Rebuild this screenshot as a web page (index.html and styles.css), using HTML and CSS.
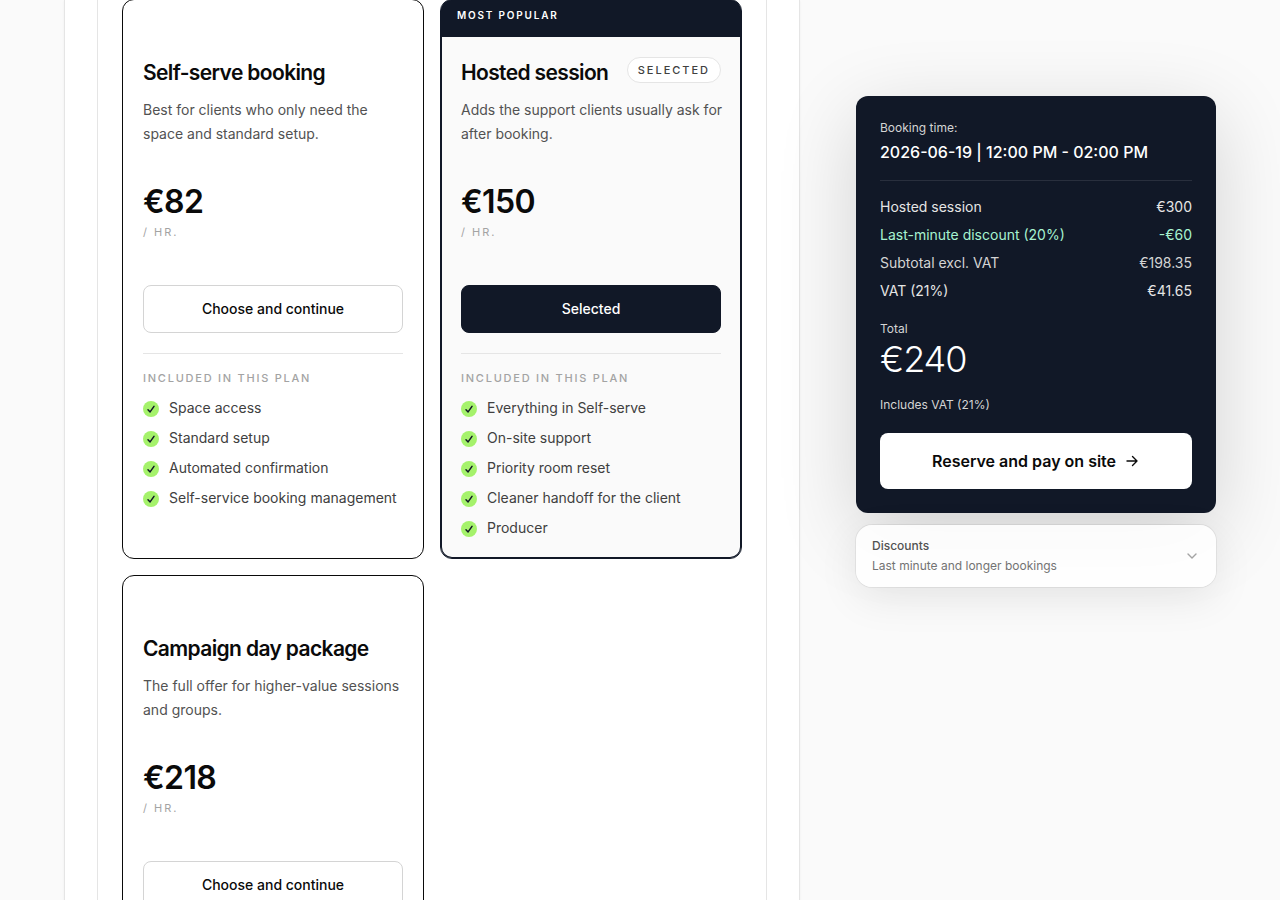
FILE: index.html
```
<!DOCTYPE html>
<html lang="en">
<head>
  <meta charset="UTF-8" />
  <meta name="viewport" content="width=device-width, initial-scale=1" />
  <title>Choose your plan</title>
  <link rel="stylesheet" href="styles.css">
</head>
<body>

  <svg class="sprite" aria-hidden="true">
    <symbol id="check" viewBox="0 0 16 16">
      <circle cx="8" cy="8" r="8" fill="#a5f26b" />
      <path d="M5 8.7 7.1 10.9 11 5.4" fill="none" stroke="#111827" stroke-width="1.5" stroke-linecap="round" stroke-linejoin="round" />
    </symbol>
  </svg>

  <div class="page">
    <main class="main">
      <section class="plans">

        <article class="plan">
          <div class="plan-banner"></div>
          <div class="plan-body">
            <div class="plan-head">
              <h2>Self-serve booking</h2>
            </div>
            <p class="plan-text">Best for clients who only need the space and standard setup.</p>
            <div class="price">€82</div>
            <div class="unit">/ HR.</div>
            <button type="button" class="btn">Choose and continue</button>
            <div class="included">
              <h3>INCLUDED IN THIS PLAN</h3>
              <ul>
                <li><svg><use href="#check" /></svg>Space access</li>
                <li><svg><use href="#check" /></svg>Standard setup</li>
                <li><svg><use href="#check" /></svg>Automated confirmation</li>
                <li><svg><use href="#check" /></svg>Self-service booking management</li>
              </ul>
            </div>
          </div>
        </article>

        <article class="plan plan-selected">
          <div class="plan-banner">MOST POPULAR</div>
          <div class="plan-body">
            <div class="plan-head">
              <h2>Hosted session</h2>
              <span class="badge">SELECTED</span>
            </div>
            <p class="plan-text">Adds the support clients usually ask for after booking.</p>
            <div class="price">€150</div>
            <div class="unit">/ HR.</div>
            <button type="button" class="btn btn-dark">Selected</button>
            <div class="included">
              <h3>INCLUDED IN THIS PLAN</h3>
              <ul>
                <li><svg><use href="#check" /></svg>Everything in Self-serve</li>
                <li><svg><use href="#check" /></svg>On-site support</li>
                <li><svg><use href="#check" /></svg>Priority room reset</li>
                <li><svg><use href="#check" /></svg>Cleaner handoff for the client</li>
                <li><svg><use href="#check" /></svg>Producer</li>
              </ul>
            </div>
          </div>
        </article>

        <article class="plan">
          <div class="plan-banner"></div>
          <div class="plan-body">
            <div class="plan-head">
              <h2>Campaign day package</h2>
            </div>
            <p class="plan-text">The full offer for higher-value sessions and groups.</p>
            <div class="price">€218</div>
            <div class="unit">/ HR.</div>
            <button type="button" class="btn">Choose and continue</button>
          </div>
        </article>

      </section>
    </main>

    <aside class="sidebar">
      <section class="summary">
        <p class="small">Booking time:</p>
        <p class="time">2026-06-19 | 12:00 PM - 02:00 PM</p>
        <dl class="lines">
          <div><dt>Hosted session</dt><dd>€300</dd></div>
          <div class="discount"><dt>Last-minute discount (20%)</dt><dd>-€60</dd></div>
          <div class="muted"><dt>Subtotal excl. VAT</dt><dd>€198.35</dd></div>
          <div><dt>VAT (21%)</dt><dd>€41.65</dd></div>
        </dl>
        <p class="small">Total</p>
        <p class="total">€240</p>
        <p class="small">Includes VAT (21%)</p>
        <button type="button" class="reserve">
          Reserve and pay on site
          <svg viewBox="0 0 16 16" width="16" height="16" fill="none" stroke="currentColor" stroke-width="1.4" stroke-linecap="round" stroke-linejoin="round"><path d="M3 8h10M8.5 3.5 13 8l-4.5 4.5" /></svg>
        </button>
      </section>

      <button type="button" class="discounts" aria-expanded="false">
        <span class="discounts-text">
          <strong>Discounts</strong>
          <span>Last minute and longer bookings</span>
        </span>
        <svg viewBox="0 0 16 16" width="16" height="16" fill="none" stroke="currentColor" stroke-width="1.4" stroke-linecap="round" stroke-linejoin="round"><path d="m4 6 4 4 4-4" /></svg>
      </button>
    </aside>
  </div>

</body>
</html>
```
FILE: styles.css
```
:root {
  --navy: #111827;
  --ink: #0a0a0a;
  --line: #e5e5e5;
  --page: #fafafa;
  --font-family: Inter, 'Liberation Sans', sans-serif;
}

* {
  box-sizing: border-box;
}

body {
  margin: 0;
  background: var(--page);
  color: var(--ink);
  font-family: var(--font-family);
  font-size: 14px;
  line-height: 20px;
}

h2, h3, p, ul, dl, dd {
  margin: 0;
  padding: 0;
}

button {
  font-family: inherit;
  cursor: pointer;
}

.sprite {
  display: none;
}

.page {
  display: grid;
  grid-template-columns: minmax(0, 1fr) 360px;
  gap: 56px;
  height: 100vh;
  padding: 0 64px;
  overflow: hidden;
}

.main {
  padding: 0 32px;
  background: #fff;
  border: solid var(--line);
  border-width: 0 1px;
  box-shadow: 0 1px 2px rgba(0, 0, 0, 0.06);
}

.plans {
  display: grid;
  grid-template-columns: 1fr 1fr;
  gap: 16px;
  margin-top: -1px;
  padding: 0 24px;
  border: solid var(--line);
  border-width: 0 1px;
}

.plan {
  overflow: hidden;
  background: #fff;
  border: 1px solid var(--ink);
  border-radius: 12px;
}

.plan-selected {
  background: var(--page);
  border-color: var(--navy);
  box-shadow: inset 0 0 0 1px var(--navy);
}

.plan-banner {
  height: 37px;
  padding: 7px 16px;
  color: #fff;
  font-size: 10px;
  font-weight: 600;
  line-height: 16px;
  letter-spacing: 0.18em;
}

.plan-selected .plan-banner {
  background: var(--navy);
}

.plan-body {
  padding: 20px;
}

.plan-head {
  display: flex;
  align-items: flex-start;
  justify-content: space-between;
}

h2 {
  font-size: 21px;
  font-weight: 600;
  line-height: 32px;
  letter-spacing: -0.03em;
}

.badge {
  padding: 4px 10px;
  background: #fff;
  border: 1px solid var(--line);
  border-radius: 13px;
  color: #404040;
  font-size: 11px;
  font-weight: 500;
  line-height: 16px;
  letter-spacing: 0.18em;
}

/* lets the longest line run a little into the card padding */
.plan-text {
  margin: 9px -8px 0 0;
  color: #525252;
  line-height: 24px;
}

.price {
  margin-top: 40px;
  font-size: 32px;
  font-weight: 600;
  line-height: 32px;
  letter-spacing: -0.02em;
}

.unit {
  margin-top: 6px;
  color: #a3a3a3;
  font-size: 11px;
  line-height: 16px;
  letter-spacing: 0.18em;
}

.btn {
  width: 100%;
  height: 48px;
  margin-top: 45px;
  padding: 0 16px 2px;
  background: #fff;
  border: 1px solid #d4d4d4;
  border-radius: 8px;
  color: var(--ink);
  font-size: 14px;
  font-weight: 500;
}

.btn-dark {
  background: var(--navy);
  border-color: var(--navy);
  color: #fff;
}

.included {
  margin-top: 20px;
  padding-top: 16px;
  border-top: 1px solid var(--line);
}

h3 {
  color: #a3a3a3;
  font-size: 11px;
  font-weight: 500;
  line-height: 16px;
  letter-spacing: 0.16em;
}

.included ul {
  display: grid;
  gap: 10px;
  margin-top: 12px;
  list-style: none;
}

.included li {
  display: flex;
  gap: 10px;
  color: #404040;
}

.included li svg {
  flex: none;
  width: 16px;
  height: 16px;
  margin-top: 3px;
}

.sidebar {
  display: flex;
  flex-direction: column;
  gap: 12px;
  padding-top: 96px;
}

.summary {
  padding: 24px;
  background: var(--navy);
  border-radius: 12px;
  box-shadow: 0 20px 80px rgba(0, 0, 0, 0.16);
  color: #fff;
}

.small {
  color: #d4d4d4;
  font-size: 12px;
  line-height: 16px;
}

.time {
  margin-top: 4px;
  padding-bottom: 16px;
  border-bottom: 1px solid rgba(255, 255, 255, 0.1);
  font-size: 16px;
  font-weight: 500;
  line-height: 24px;
}

.lines {
  display: grid;
  gap: 8px;
  margin: 16px 0 20px;
  color: #e5e5e5;
}

.lines div {
  display: flex;
  justify-content: space-between;
}

.lines .muted {
  color: #d4d4d4;
}

.lines .discount {
  color: #a7f3d0;
}

.total {
  margin: 2px 0 18px;
  font-size: 36px;
  font-weight: 300;
  line-height: 40px;
  letter-spacing: -0.03em;
}

.reserve {
  display: flex;
  align-items: center;
  justify-content: center;
  gap: 8px;
  width: 100%;
  height: 56px;
  margin-top: 20px;
  background: #fff;
  border: 0;
  border-radius: 8px;
  color: var(--ink);
  font-size: 16px;
  font-weight: 600;
}

.discounts {
  display: flex;
  align-items: center;
  justify-content: space-between;
  padding: 11px 16px;
  background: rgba(255, 255, 255, 0.85);
  border: 0;
  border-radius: 16px;
  box-shadow: 0 0 0 1px rgba(0, 0, 0, 0.06), 0 12px 40px rgba(0, 0, 0, 0.08);
  color: #737373;
  font-size: 12px;
  line-height: 20px;
  text-align: left;
}

.discounts-text {
  display: grid;
}

.discounts strong {
  color: #525252;
  font-weight: 500;
}

.discounts svg {
  color: #a3a3a3;
}
```
